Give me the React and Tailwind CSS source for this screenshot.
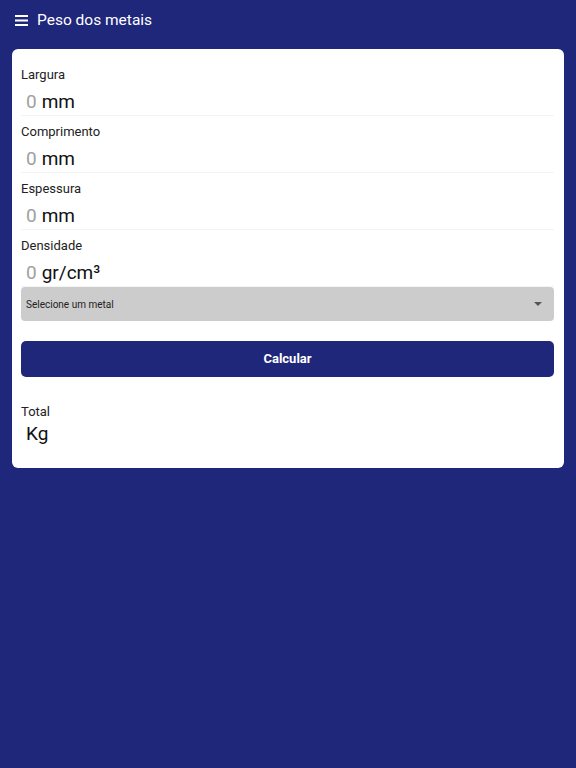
const fields = [
  { label: 'Largura', unit: 'mm' },
  { label: 'Comprimento', unit: 'mm' },
  { label: 'Espessura', unit: 'mm' },
  { label: 'Densidade', unit: 'gr/cm³' },
];

function Field({ label, unit }) {
  return (
    <div className="mb-[6px]">
      <p className="h-5 text-[13px] leading-5 text-[#222]">{label}</p>
      <div className="flex h-[31px] items-center gap-[5px] border-b border-[#f4f4f4] pl-[5px] pt-[4px] text-[19px]">
        <span className="text-[#a0a0a0]">0</span>
        <span className="text-[#111]">{unit}</span>
      </div>
    </div>
  );
}

export default function App() {
  return (
    <div className="min-h-[768px] bg-[#1f277b] font-['Roboto',sans-serif]">
      <header className="flex h-10 items-center gap-[9px] px-[15px] pt-[1px] text-white">
        <svg width="13" height="11" viewBox="0 0 13 11" fill="white">
          <rect x="0" y="0" width="13" height="2" />
          <rect x="0" y="4.5" width="13" height="2" />
          <rect x="0" y="9" width="13" height="2" />
        </svg>
        <h1 className="text-[15.5px]">Peso dos metais</h1>
      </header>

      <main className="mx-3 mt-[9px] rounded-md bg-white pb-[22px] pl-[9px] pr-[10px] pt-[16px]">
        {fields.map((f) => (
          <Field key={f.label} label={f.label} unit={f.unit} />
        ))}

        <div className="-mt-[6px] flex h-[34px] items-center justify-between rounded bg-[#cccccc] pl-[5px] pr-[12px]">
          <span className="text-[10px] text-[#222]">Selecione um metal</span>
          <svg width="8" height="4" viewBox="0 0 8 4" fill="#555">
            <path d="M0 0 L8 0 L4 4 Z" />
          </svg>
        </div>

        <button
          type="button"
          className="mt-5 flex h-9 w-full items-center justify-center rounded-[5px] bg-[#1f277b] text-[13px] font-bold text-white"
        >
          Calcular
        </button>

        <div className="mt-[25px]">
          <p className="h-5 text-[13px] leading-5 text-[#222]">Total</p>
          <p className="pl-[5px] text-[19px] leading-6 text-[#111]">Kg</p>
        </div>
      </main>
    </div>
  );
}
